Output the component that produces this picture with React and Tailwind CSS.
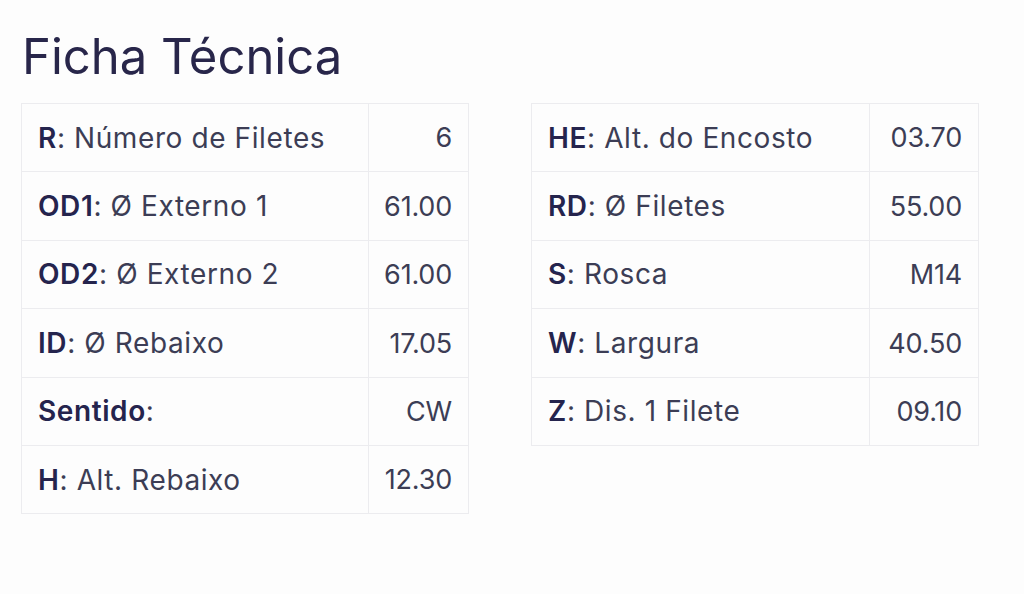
const left = [
  { k: 'R', label: 'Número de Filetes', v: '6' },
  { k: 'OD1', label: 'Ø Externo 1', v: '61.00' },
  { k: 'OD2', label: 'Ø Externo 2', v: '61.00' },
  { k: 'ID', label: 'Ø Rebaixo', v: '17.05' },
  { k: 'Sentido', label: '', v: 'CW' },
  { k: 'H', label: 'Alt. Rebaixo', v: '12.30' },
]

const right = [
  { k: 'HE', label: 'Alt. do Encosto', v: '03.70' },
  { k: 'RD', label: 'Ø Filetes', v: '55.00' },
  { k: 'S', label: 'Rosca', v: 'M14' },
  { k: 'W', label: 'Largura', v: '40.50' },
  { k: 'Z', label: 'Dis. 1 Filete', v: '09.10' },
]

function SpecTable({ rows, first, second }) {
  return (
    <table className="w-[447px] table-fixed border-collapse border border-[#ececef]">
      <colgroup>
        <col className={first} />
        <col className={second} />
      </colgroup>
      <tbody>
        {rows.map((r) => (
          <tr key={r.k} className="h-[68.4px]">
            <td className="whitespace-nowrap border border-[#ececef] px-4 text-[#3c3d55]">
              <b className="font-semibold text-[#25244d]">{r.k}</b>:{r.label ? ' ' + r.label : ''}
            </td>
            <td className="whitespace-nowrap border border-[#ececef] pl-0 pr-4 pt-[2px] text-right text-[27px] tracking-[-0.2px] text-[#3c3d55]">{r.v}</td>
          </tr>
        ))}
      </tbody>
    </table>
  )
}

export default function App() {
  return (
    <div className="min-h-[594px] bg-[#fdfdfd] pl-[21px] pt-[26px] font-['Inter',sans-serif] text-[28px] tracking-[0.6px]">
      <h1 className="mb-[15px] pl-px text-[49px] leading-[62px] tracking-[0px] text-[#28264a]">Ficha Técnica</h1>
      <div className="flex items-start gap-[62px]">
        <SpecTable rows={left} first="w-[347px]" second="w-[100px]" />
        <SpecTable rows={right} first="w-[338px]" second="w-[109px]" />
      </div>
    </div>
  )
}
